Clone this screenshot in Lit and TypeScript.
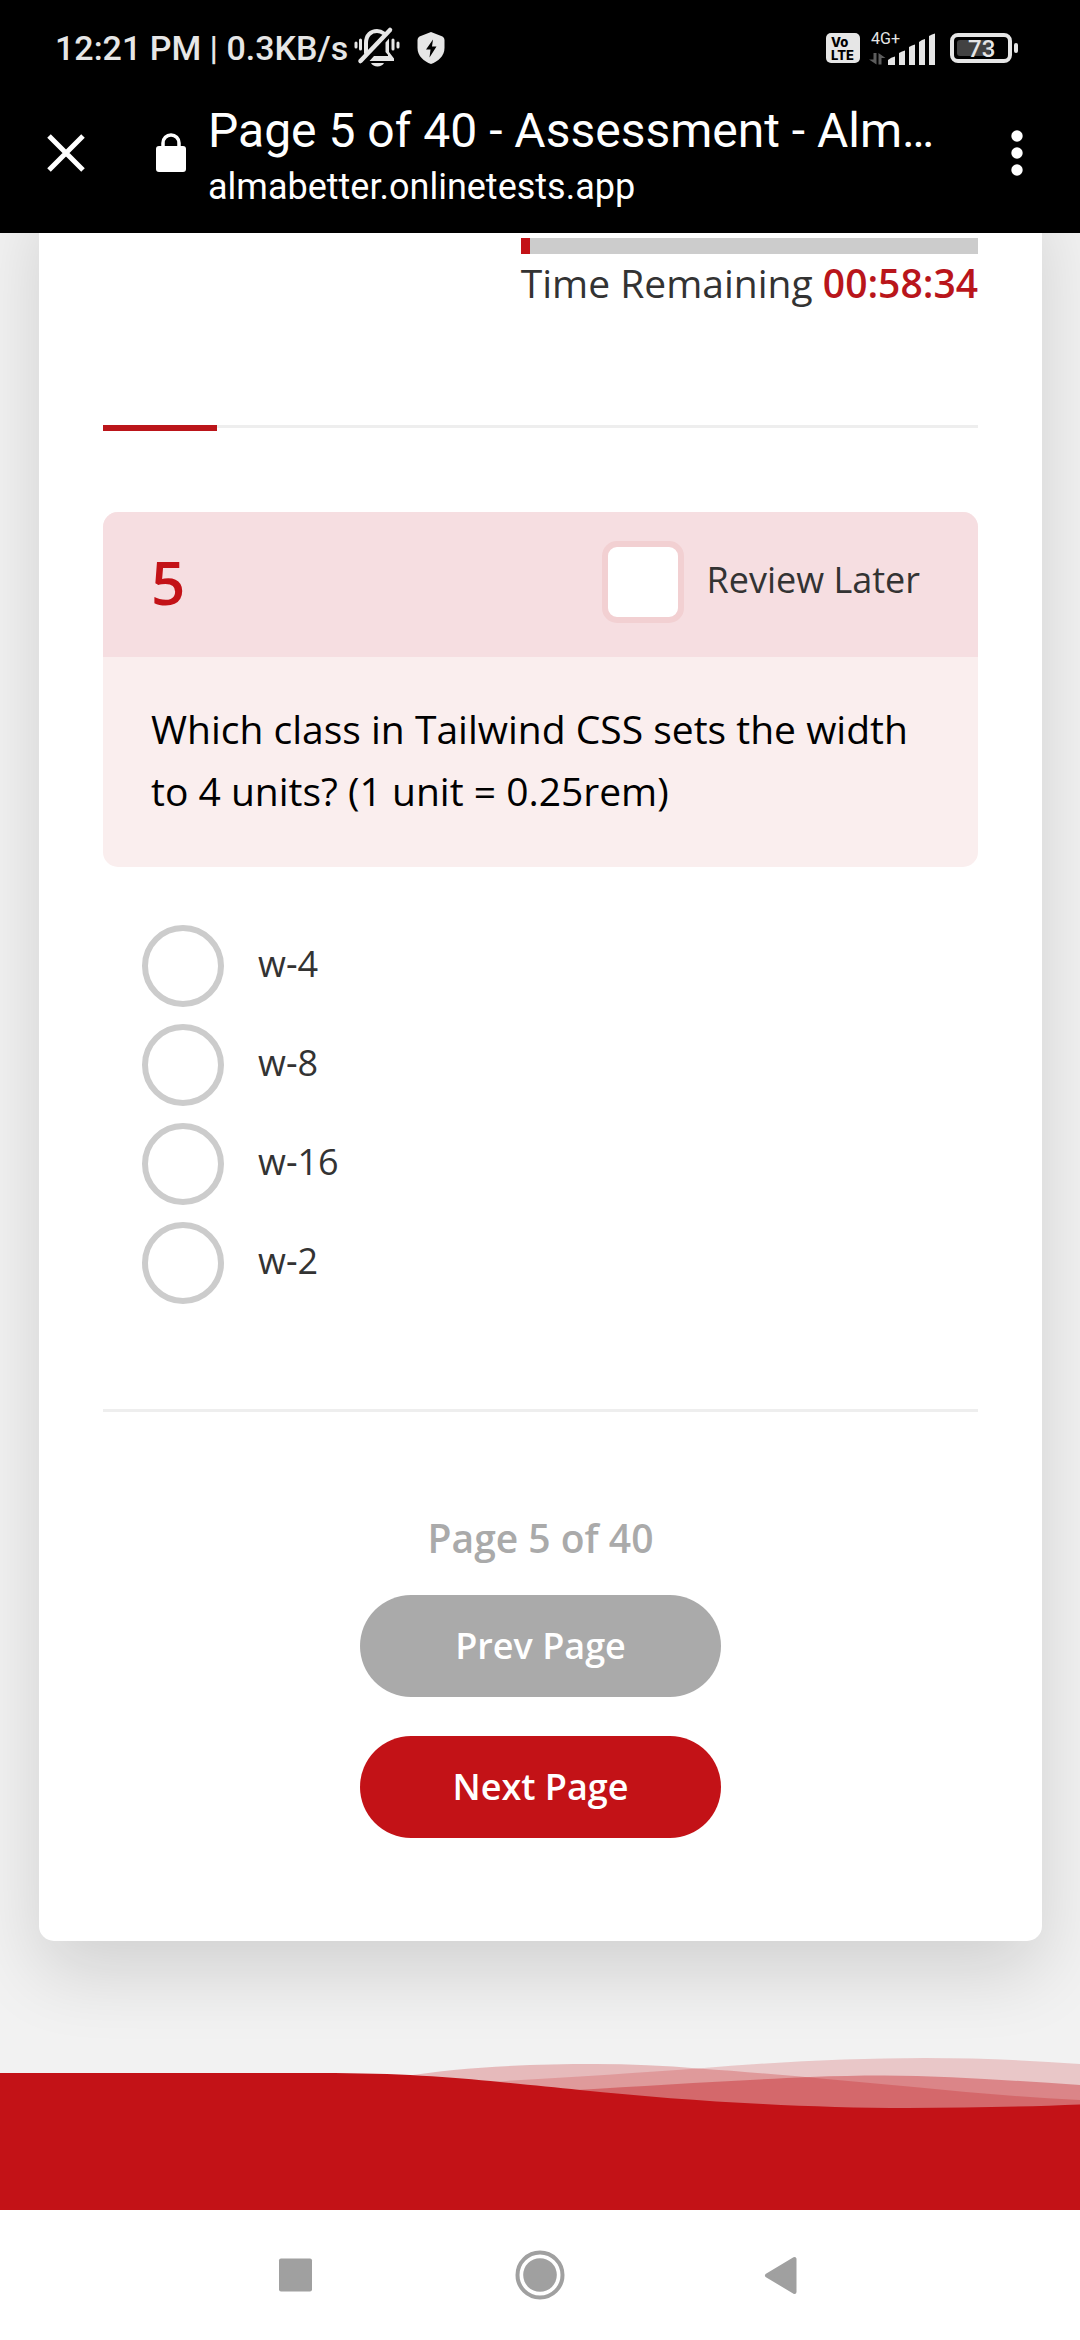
import { LitElement, html, css } from "lit";
import { customElement, property, state } from "lit/decorators.js";

/* Phone status strip: clock, network speed, mute, shield, signal, battery. */
@customElement("status-strip")
class StatusStrip extends LitElement {
  static styles = css`
    :host {
      display: flex;
      align-items: center;
      justify-content: space-between;
      height: 96px;
      padding: 0 61px 0 55px;
      background: #000;
      color: #e6e6e6;
      font-family: Roboto, "Liberation Sans", sans-serif;
    }
    .side {
      display: flex;
      align-items: center;
    }
    .clock {
      font-size: 34px;
      font-weight: 500;
      line-height: 40px;
      white-space: nowrap;
    }
    .bell {
      margin-left: 6px;
    }
    .shield {
      margin-left: 17px;
    }
    svg {
      display: block;
      flex: none;
      overflow: visible;
    }
    .signal {
      margin: 0 13px 0 9px;
    }
    .small {
      font: 400 16px Roboto, sans-serif;
    }
    .volte {
      font: 800 13px Inter, sans-serif;
    }
    .level {
      font: 500 24px Roboto, sans-serif;
    }
  `;

  render() {
    return html`
      <div class="side">
        <span class="clock">12:21 PM | 0.3KB/s</span>
        <svg class="bell" width="46" height="40" viewBox="0 0 46 40" role="img" aria-label="Muted">
          <g fill="none" stroke="#e6e6e6" stroke-width="3" stroke-linecap="round">
            <path d="M2 15v4M6.500 12v9M39 12v9M44 15v4" />
            <path d="M12 25V15C12 7 17 3 23 3c3 0 5 1 7 2.500" stroke-width="4" />
            <path d="M6.500 33 36 2" stroke-width="4.500" />
          </g>
          <path d="M20 28H34V27L31.500 24V14.500L35 10.500V24L40 30.500V33H15.500Z" fill="#e6e6e6" />
          <path d="M17 35H30C28 39.500 19 39.500 17 35Z" fill="#e6e6e6" />
        </svg>
        <svg class="shield" width="28" height="32" viewBox="0 0 28 32" role="img" aria-label="Protected">
          <path
            d="M14 0 25.500 4.500Q27.500 5.500 27.500 8V16C27.500 24 21 29.500 14 32 7 29.500 0.500 24 0.500 16V8Q0.500 5.500 2.500 4.500Z"
            fill="#e6e6e6"
          />
          <path d="M16 7.500 9 17.500h4.500L12.500 25.500 19.500 14.500H15Z" fill="#000" />
        </svg>
      </div>
      <div class="side">
        <svg width="34" height="30" viewBox="0 0 34 30">
          <rect width="34" height="30" rx="5" fill="#e6e6e6" />
          <text class="volte" x="5" y="14">Vo</text>
          <text class="volte" x="5" y="27">LTE</text>
        </svg>
        <svg class="signal" width="68" height="38" viewBox="0 -2 68 38">
          <text class="small" x="2" y="13" fill="#e6e6e6">4G+</text>
          <path d="M4.500 22h3v11.500L0 28.500H4.500ZM9.500 33.500V22L16.500 27H12.500V33.500Z" fill="#5c5c5c" />
          <g fill="#e6e6e6">
            <path d="M19 34V29Q22 26 26 25.500V34Z" />
            <path d="M30 34V22Q33 20 36 19.500V34Z" />
            <path d="M40 34V16Q43 14 46 13.500V34Z" />
            <path d="M50 34V11Q53 8.500 56 8V34Z" />
            <path d="M60 34V5Q63 3 66 2.500V34Z" />
          </g>
        </svg>
        <svg width="69" height="30" viewBox="0 0 69 30">
          <rect x="2" y="2" width="58" height="26" rx="6" fill="none" stroke="#e6e6e6" stroke-width="4" />
          <rect x="7" y="7" width="33" height="16" rx="3" fill="#424242" />
          <rect x="64" y="10" width="4" height="10" rx="2" fill="#e6e6e6" />
          <text class="level" x="18" y="24" fill="#e6e6e6">73</text>
        </svg>
      </div>
    `;
  }
}

/* Browser tab header: close, lock, page title with its host, menu. */
@customElement("tab-header")
class TabHeader extends LitElement {
  @property() heading = "";
  @property() host = "";

  static styles = css`
    :host {
      display: flex;
      align-items: flex-start;
      padding: 7px 35px 17px 38px;
      background: #000;
      color: #fff;
      font-family: Roboto, "Liberation Sans", sans-serif;
    }
    button {
      display: flex;
      flex: none;
      align-items: center;
      justify-content: center;
      width: 56px;
      height: 100px;
      padding: 0;
      border: 0;
      background: none;
      color: inherit;
    }
    .lock {
      flex: none;
      width: 30px;
      height: 100px;
      margin: 0 22px 0 62px;
    }
    .titles {
      flex: 1;
      min-width: 0;
    }
    .heading,
    .address {
      margin: 0;
      font-weight: 400;
      white-space: nowrap;
    }
    .heading {
      font-size: 48px;
      line-height: 56px;
    }
    .address {
      font-size: 36px;
      line-height: 57px;
    }
  `;

  render() {
    return html`
      <button aria-label="Close tab">
        <svg width="38" height="38" viewBox="0 0 38 38">
          <path d="M2 2 36 36M36 2 2 36" stroke="#fff" stroke-width="5" />
        </svg>
      </button>
      <svg class="lock" viewBox="0 0 30 38" role="img" aria-label="Secure">
        <rect y="12" width="30" height="26" rx="3" fill="#fff" />
        <path d="M7 14V9a8 8 0 0 1 16 0v5" fill="none" stroke="#fff" stroke-width="3.500" />
      </svg>
      <div class="titles">
        <h1 class="heading">${this.heading}</h1>
        <p class="address">${this.host}</p>
      </div>
      <button aria-label="Menu">
        <svg width="12" height="46" viewBox="0 0 12 46" fill="#fff">
          <circle cx="6" cy="6" r="5.700" />
          <circle cx="6" cy="23" r="5.700" />
          <circle cx="6" cy="40" r="5.700" />
        </svg>
      </button>
    `;
  }
}

/* Assessment card: timer, progress, question, answers and paging. */
@customElement("question-card")
class QuestionCard extends LitElement {
  @property({ type: Number }) page = 5;
  @property({ type: Number }) pages = 40;
  @state() private elapsed = 2;
  @state() private progress = 13;
  private answers = ["w-4", "w-8", "w-16", "w-2"];

  static styles = css`
    :host {
      display: block;
      margin: -48px 38px 0 39px;
      padding: 53px 64px 103px;
      border-radius: 0 0 15px 15px;
      background: #fff;
      box-shadow: 0 30px 75px rgba(0, 0, 0, 0.14);
      color: #333;
      font-family: "Open Sans", "Noto Sans", sans-serif;
    }
    .timer {
      width: fit-content;
      margin-left: auto;
      font-size: 39px;
      line-height: 58px;
      white-space: nowrap;
    }
    .timer-track {
      height: 16px;
      background: #ccc;
    }
    .timer-fill {
      height: 16px;
      background: #c31217;
    }
    .time {
      color: #b9151b;
      font-weight: 600;
    }
    .progress {
      height: 6px;
      margin: 113px 0 81px;
      background: linear-gradient(#eee 3px, transparent 3px);
    }
    .progress-fill {
      height: 6px;
      background: #bb151a;
    }
    .question {
      overflow: hidden;
      border-radius: 15px;
      background: #faeeee;
    }
    .question-head {
      display: flex;
      align-items: flex-start;
      justify-content: space-between;
      padding: 29px 58px 34px 48px;
      background: #f6dee1;
    }
    .number {
      margin: 0;
      color: #c31217;
      font-size: 60px;
      font-weight: 600;
      line-height: 82px;
    }
    .choice {
      display: flex;
      align-items: flex-start;
      font-size: 36px;
      line-height: 78px;
    }
    input {
      appearance: none;
      flex: none;
      box-sizing: border-box;
      width: 82px;
      height: 82px;
      margin: 0;
      border: 6px solid #ccc;
      background: #fff;
    }
    input[type="radio"] {
      margin-right: 34px;
      border-radius: 50%;
    }
    input[type="radio"]:checked {
      background: #c31217;
    }
    input[type="checkbox"] {
      margin-right: 22px;
      border-color: #f2d0d2;
      border-radius: 15px;
    }
    input[type="checkbox"]:checked {
      background: #c31217;
    }
    .prompt {
      margin: 0;
      padding: 41px 48px 45px;
      color: #000;
      font-size: 39px;
      line-height: 62px;
    }
    .answers {
      display: flex;
      flex-direction: column;
      gap: 17px;
      margin: 58px 0 105px;
      padding: 0 39px;
      border: 0;
    }
    .rule {
      height: 3px;
      margin: 0 0 97px;
      border: 0;
      background: #eee;
    }
    .pager {
      display: flex;
      flex-direction: column;
      align-items: center;
      gap: 39px;
    }
    .count {
      margin: 0 0 -11px;
      color: #aaa;
      font-size: 39px;
      font-weight: 600;
      line-height: 58px;
    }
    .pager button {
      width: 361px;
      height: 102px;
      padding: 0;
      border: 0;
      border-radius: 51px;
      background: #aaa;
      color: #fff;
      font: 600 36px/50px "Open Sans", "Noto Sans", sans-serif;
    }
    .pager .next {
      background: #c31217;
    }
  `;

  render() {
    return html`
      <div class="timer">
        <div class="timer-track"><div class="timer-fill" style="width:${this.elapsed}%"></div></div>
        Time Remaining <span class="time">00:58:34</span>
      </div>
      <div class="progress"><div class="progress-fill" style="width:${this.progress}%"></div></div>
      <section class="question">
        <div class="question-head">
          <h2 class="number">${this.page}</h2>
          <label class="choice"><input type="checkbox" name="review" />Review Later</label>
        </div>
        <p class="prompt" id="prompt">
          Which class in Tailwind CSS sets the width to 4 units? (1 unit = 0.25rem)
        </p>
      </section>
      <div class="answers" role="radiogroup" aria-labelledby="prompt">
        ${this.answers.map(
          (answer) => html`
            <label class="choice"><input type="radio" name="answer" value=${answer} />${answer}</label>
          `
        )}
      </div>
      <hr class="rule" />
      <div class="pager">
        <p class="count">Page ${this.page} of ${this.pages}</p>
        <button>Prev Page</button>
        <button class="next">Next Page</button>
      </div>
    `;
  }
}

/* Red page footer with translucent waves along its top edge. */
@customElement("wave-footer")
class WaveFooter extends LitElement {
  static styles = css`
    :host {
      display: block;
      margin-top: 114px;
      padding-bottom: 95px;
      background: linear-gradient(transparent 60px, #c31217 60px);
    }
    svg {
      display: block;
      width: 100%;
      height: 60px;
    }
  `;

  render() {
    return html`
      <svg viewBox="0 0 1080 60" preserveAspectRatio="none" fill="#c31217" aria-hidden="true">
        <path
          d="M400 22C460 12 530 9 595 9 630 9 665 10.500 698 13.500 736 16 770 19 810 22.500 900 30 990 41 1080 45V60H400Z"
          opacity="0.25"
        />
        <path d="M440 31 496 26.500C570 22.500 640 17.500 698 13.500 775 7 850 3 925 3 980 3 1030 5.500 1080 9V60H440Z" opacity="0.19" />
        <path d="M520 38 576 35C650 30.500 740 25 810 22 835 21 860 20.500 883 20.500 950 20.500 1015 26 1080 30V60H520Z" opacity="0.36" />
        <path
          d="M0 18H320C400 18 450 22 500 27 530 30 555 32.500 580 35 640 41 700 46 763 49 810 51.500 860 53 908 53 970 53 1030 51.500 1080 49.500V60H0Z"
        />
      </svg>
    `;
  }
}

/* Phone navigation keys. */
@customElement("nav-keys")
class NavKeys extends LitElement {
  static styles = css`
    :host {
      display: grid;
      grid-template-columns: repeat(3, 1fr);
      height: 130px;
      padding: 0 16%;
      background: #fff;
    }
    button {
      display: flex;
      align-items: center;
      justify-content: center;
      padding: 0;
      border: 0;
      background: none;
    }
  `;

  render() {
    return html`
      <button aria-label="Recent apps">
        <svg width="50" height="50" viewBox="0 0 50 50"><rect x="9" y="8.500" width="33" height="33" rx="2" fill="#a0a0a0" /></svg>
      </button>
      <button aria-label="Home">
        <svg width="50" height="50" viewBox="0 0 50 50">
          <circle cx="25" cy="25" r="22.500" fill="none" stroke="#a0a0a0" stroke-width="4" />
          <circle cx="25" cy="25" r="16.800" fill="#a0a0a0" />
        </svg>
      </button>
      <button aria-label="Back">
        <svg width="50" height="50" viewBox="0 0 50 50">
          <path d="M34.500 9V42L7 25.500Z" fill="#a0a0a0" stroke="#a0a0a0" stroke-width="4" stroke-linejoin="round" />
        </svg>
      </button>
    `;
  }
}

@customElement("app-root")
class AppRoot extends LitElement {
  static styles = css`
    :host {
      display: flex;
      flex-direction: column;
      min-height: 100vh;
      background: #f2f2f2;
    }
    main {
      flex: 1;
      overflow: hidden;
    }
  `;

  render() {
    return html`
      <status-strip></status-strip>
      <tab-header heading="Page 5 of 40 - Assessment - Alm…" host="almabetter.onlinetests.app"></tab-header>
      <main>
        <question-card page="5" pages="40"></question-card>
        <wave-footer></wave-footer>
      </main>
      <nav-keys></nav-keys>
    `;
  }
}
